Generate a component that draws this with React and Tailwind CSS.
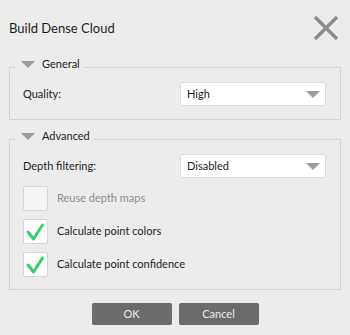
import React, { useState } from 'react';

const font = { fontFamily: 'Lato, "Noto Sans", sans-serif' };

const Triangle = ({ className = '' }) => (
  <svg width="14" height="7" viewBox="0 0 14 7" className={className}>
    <path d="M0 0 L14 0 L7 7 Z" fill="#9b9b9b" />
  </svg>
);

const Combo = ({ value }) => (
  <div className="w-[146px] h-[24px] bg-white border border-[#dcdcdc] rounded-[2px] flex items-center justify-between pl-[6px] pr-[5px] text-[11px] text-[#1c1c1c]">
    <span>{value}</span>
    <Triangle />
  </div>
);

const Check = ({ checked, disabled, label, onToggle }) => (
  <div className="flex items-center gap-[9px] h-[25px]">
    <button
      type="button"
      onClick={onToggle}
      className={
        disabled
          ? 'w-[25px] h-[25px] rounded-[2px] border border-[#d6d6d6] bg-[#f4f4f4]'
          : 'w-[25px] h-[25px] rounded-[2px] border border-[#d6d6d6] bg-white'
      }
    >
      {checked && (
        <svg width="23" height="23" viewBox="0 0 23 23">
          <path d="M4 12 L9.5 19 L18.5 5" fill="none" stroke="#33d16a" strokeWidth="3" strokeLinecap="round" strokeLinejoin="round" />
        </svg>
      )}
    </button>
    <span className={disabled ? 'text-[11px] text-[#8d8d8d]' : 'text-[11px] text-[#1c1c1c]'}>{label}</span>
  </div>
);

const Group = ({ title, children, className = '' }) => (
  <fieldset className={'mx-[9px] border border-[#d3d3d3] p-0 ' + className}>
    <legend className="ml-[7px] px-[4px] pb-[6px] h-[20px] flex items-center gap-[7px] leading-[14px]">
      <Triangle />
      <span className="text-[11px] text-[#1c1c1c]">{title}</span>
    </legend>
    {children}
  </fieldset>
);

export default function App() {
  const [colors, setColors] = useState(true);
  const [confidence, setConfidence] = useState(true);

  return (
    <div className="w-[350px] h-[335px] bg-[#ececec] flex flex-col" style={font}>
      <div className="h-[57px] flex items-center justify-between pl-[9px] pr-[11px]">
        <h1 className="text-[13px] text-[#1c1c1c]">Build Dense Cloud</h1>
        <svg width="26" height="26" viewBox="0 0 26 26" className="mb-[2px]">
          <path d="M2 2 L24 24 M24 2 L2 24" stroke="#8c8c8c" strokeWidth="3.5" />
        </svg>
      </div>

      <Group title="General">
        <div className="pt-[5px] pb-[13px] pl-[13px] pr-[14px] flex items-center justify-between">
          <span className="text-[11px] text-[#1c1c1c]">Quality:</span>
          <Combo value="High" />
        </div>
      </Group>

      <Group title="Advanced" className="mt-[9px]">
        <div className="pt-[5px] pb-[12px] pl-[13px] pr-[14px] flex flex-col gap-[8px]">
          <div className="flex items-center justify-between">
            <span className="text-[11px] text-[#1c1c1c]">Depth filtering:</span>
            <Combo value="Disabled" />
          </div>
          <Check disabled label="Reuse depth maps" />
          <Check checked={colors} onToggle={() => setColors(!colors)} label="Calculate point colors" />
          <Check checked={confidence} onToggle={() => setConfidence(!confidence)} label="Calculate point confidence" />
        </div>
      </Group>

      <div className="flex justify-center gap-[7px] mt-[13px]">
        <button className="w-[80px] h-[22px] bg-[#6b6b6b] rounded-[2px] text-[11px] text-[#ededed]">OK</button>
        <button className="w-[80px] h-[22px] bg-[#6b6b6b] rounded-[2px] text-[11px] text-[#ededed]">Cancel</button>
      </div>
    </div>
  );
}
